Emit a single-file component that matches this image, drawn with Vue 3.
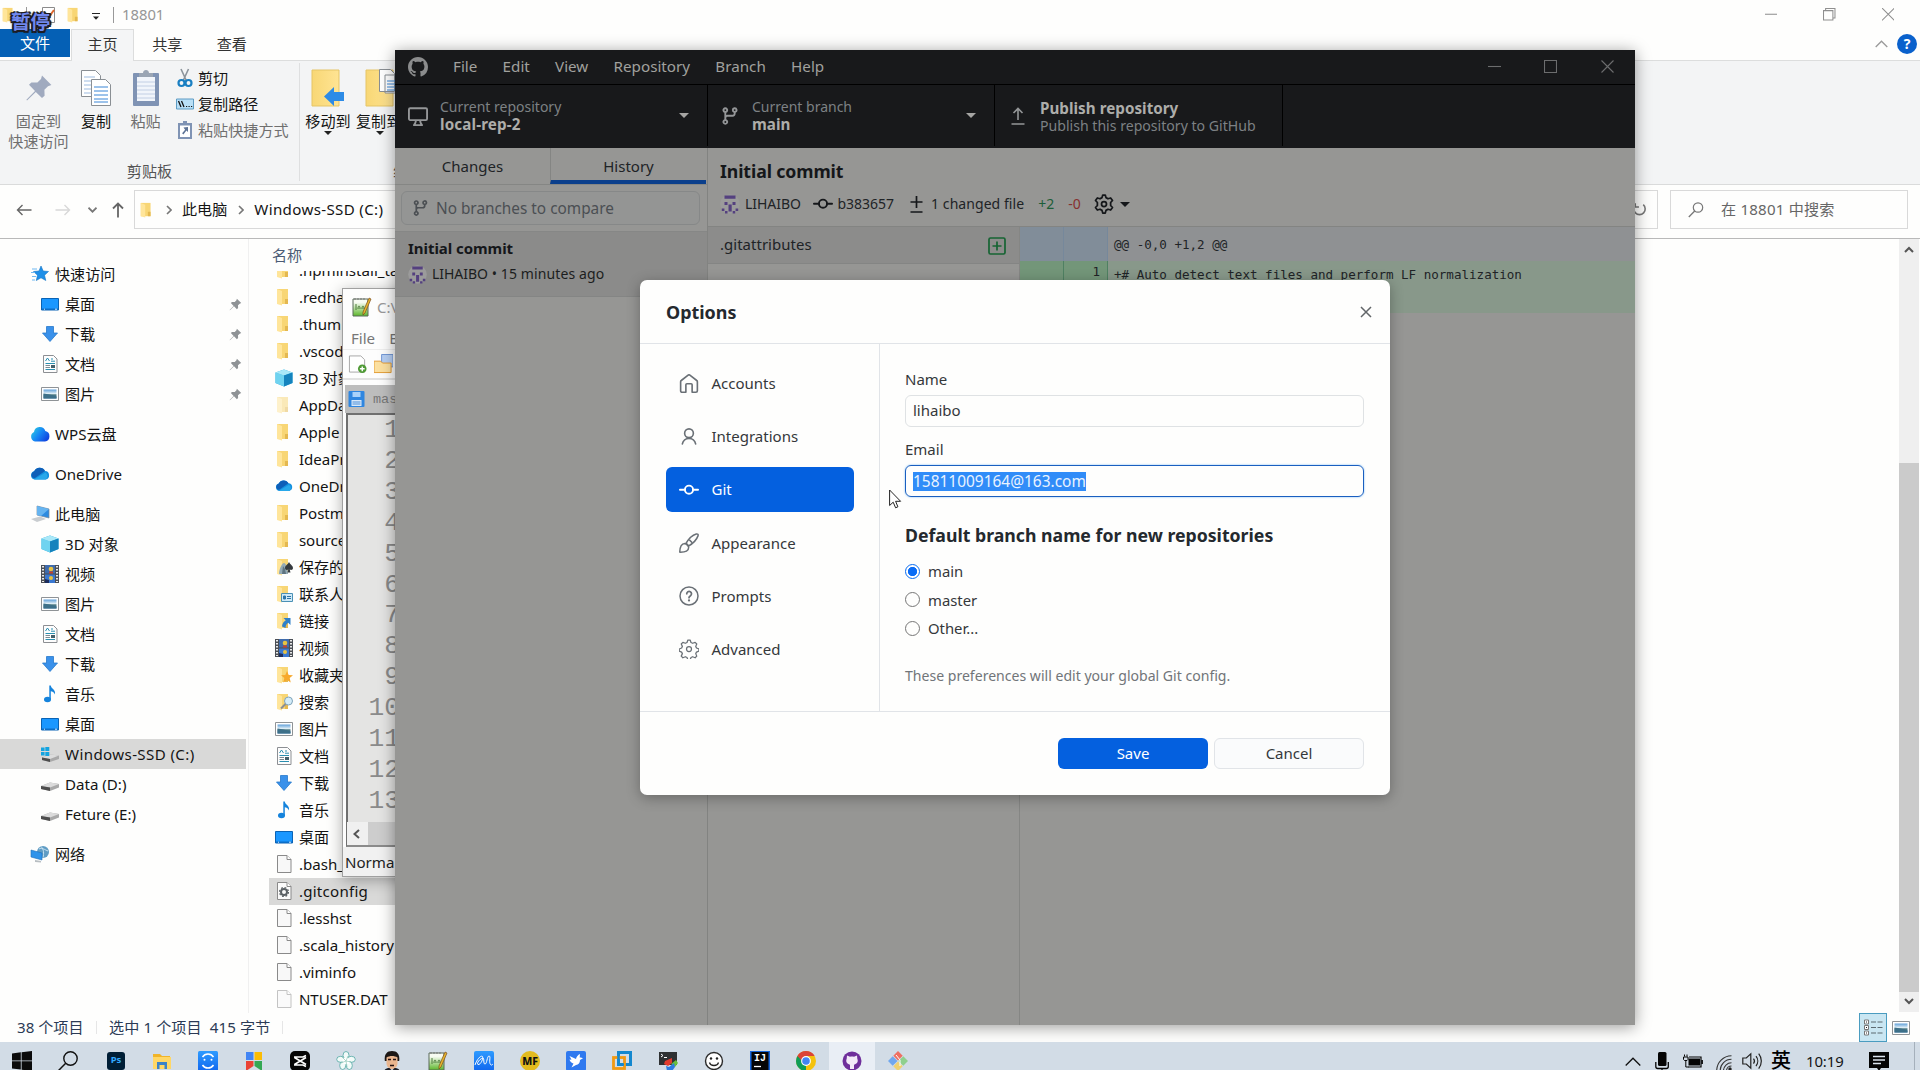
<script setup>
const quick = [
  { icon: 'desktop', label: '桌面' },
  { icon: 'download', label: '下载' },
  { icon: 'doc', label: '文档' },
  { icon: 'picture', label: '图片' },
]
const pc = [
  { icon: 'cube', label: '3D 对象' },
  { icon: 'video', label: '视频' },
  { icon: 'picture', label: '图片' },
  { icon: 'doc', label: '文档' },
  { icon: 'download', label: '下载' },
  { icon: 'music', label: '音乐' },
  { icon: 'desktop', label: '桌面' },
  { icon: 'drivewin', label: 'Windows-SSD (C:)', active: true },
  { icon: 'drive', label: 'Data (D:)' },
  { icon: 'drive', label: 'Feture (E:)' },
]
const files = [
  ['folder', '.npminstall_ta'],
  ['folder', '.redha'],
  ['folder', '.thuml'],
  ['folder', '.vscod'],
  ['cube', '3D 对象'],
  ['folder', 'AppDa', 'faded'],
  ['folder', 'Apple'],
  ['folder', 'IdeaPr'],
  ['onedrive', 'OneDr'],
  ['folder', 'Postm'],
  ['folder', 'source'],
  ['fgame', '保存的'],
  ['fcontact', '联系人'],
  ['flink', '链接'],
  ['video', '视频'],
  ['fstar', '收藏夹'],
  ['fsearch', '搜索'],
  ['picture', '图片'],
  ['doc', '文档'],
  ['download', '下载'],
  ['music', '音乐'],
  ['desktop', '桌面'],
  ['file', '.bash_'],
  ['filegear', '.gitconfig', 'selected'],
  ['file', '.lesshst'],
  ['file', '.scala_history'],
  ['file', '.viminfo'],
  ['file', 'NTUSER.DAT', 'ghost'],
]
const apps = ['ps', 'explorer', 'sync', 'google', 'capcut', 'petal', 'face', 'npp', 'wave', 'mf', 'bird', 'vm', 'xshell', 'smile', 'ij', 'chrome', 'ghd', 'git']
const marks = { ps: 'Ps', mf: 'MF', ij: 'IJ' }
const options = [
  ['home', 'Accounts'],
  ['person', 'Integrations'],
  ['commit', 'Git'],
  ['brush', 'Appearance'],
  ['question', 'Prompts'],
  ['gear', 'Advanced'],
]
const menus = ['File', 'Edit', 'View', 'Repository', 'Branch', 'Help']
</script>

<template>
  <div class="screen">
    <svg class="defs" width="0" height="0">
      <defs>
        <linearGradient id="gFold" x1="0" x2="1"><stop offset="0" stop-color="#f8d775" /><stop offset="1" stop-color="#ffe493" /></linearGradient>
        <linearGradient id="gSky" x1="0" y1="0" x2="0" y2="1"><stop offset="0" stop-color="#5f9fd8" /><stop offset=".45" stop-color="#dfeef6" /><stop offset=".6" stop-color="#4f7a80" /><stop offset="1" stop-color="#3f78a8" /></linearGradient>
        <linearGradient id="gWps" x1="0" x2="1" y2=".6"><stop offset="0" stop-color="#2fd6dc" /><stop offset=".55" stop-color="#1687f5" /><stop offset="1" stop-color="#1148e0" /></linearGradient>
        <linearGradient id="gSync" x1="0" y1="0" x2="0" y2="1"><stop offset="0" stop-color="#2d9bff" /><stop offset="1" stop-color="#1267ee" /></linearGradient>
        <linearGradient id="gNpp" x1="0" y1="0" x2="0" y2="1"><stop offset=".2" stop-color="#f7fbf2" /><stop offset="1" stop-color="#5bb62a" /></linearGradient>
      </defs>
      <symbol id="folder" viewBox="0 0 18 18"><path d="M2 1h11v15H2z" fill="#f8d675" /><path d="M10 11h3v5h-3z" fill="#e4b850" /><path d="M2 1l5 2v14.500L2 16z" fill="#ffe59a" /></symbol>
      <symbol id="desktop" viewBox="0 0 18 18"><path d="M.5 3.500h17v11.500H.5z" fill="#1a97ff" stroke="#0a63b5" /><path d="M1 13.500h16v1.500H1z" fill="#0c6dc7" /><path d="M3 14.200h1M14 14.200h2" stroke="#d5ecff" /></symbol>
      <symbol id="download" viewBox="0 0 18 18"><path d="M5.500 1.500h7V8h4L9 16.500 1.500 8h4z" fill="#3a91ea" stroke="#2678cc" stroke-width=".8" /></symbol>
      <symbol id="doc" viewBox="0 0 18 18"><path d="M2.500.5h10L16 4v13.500H2.500z" fill="#fdfdfd" stroke="#8c8f93" /><path d="M4.500 6l2-3 2 3M10 4h2M10 6.200h4M4.500 8.500H14M4.500 14.500H14" stroke="#2a8fb0" fill="none" /><path d="M4.500 10.500H9M4.500 12.500H9" stroke="#7b8a92" /><path d="M10 10h4v3h-4z" fill="#44606b" /></symbol>
      <symbol id="picture" viewBox="0 0 18 18"><path d="M.5 2.500h17v13H.5z" fill="#fff" stroke="#8f9396" /><path d="M2.500 4.500h13v9h-13z" fill="url(#gSky)" /><path d="M2.500 8.500c4 .5 8 1 13 3v2h-13z" fill="#3d7089" /></symbol>
      <symbol id="cube" viewBox="0 0 18 18"><path d="M9 .5l8.500 3v10.500L9 17.500.5 14V3.500z" fill="#27a9dc" /><path d="M.5 3.500L9 6.500v11L.5 14z" fill="#6fd3f0" /><path d="M9 .5l8.500 3L9 6.500.5 3.500z" fill="#a9e8f8" /><path d="M9 6.500l8.500-3V14L9 17.500z" fill="#1583bd" /></symbol>
      <symbol id="video" viewBox="0 0 18 18"><path d="M0 0h18v18H0z" fill="#4b4f55" /><path d="M2 1v16M16 1v16" stroke="#e9e9e9" stroke-width="2" stroke-dasharray="1.500 1.500" /><path d="M4 0h10v8.500H4z" fill="#3f6bab" /><path d="M4 9.500h10V18H4z" fill="#3a78d0" /><circle cx="10" cy="4" r="2.300" fill="#e8c341" /><path d="M8 6.500l4 0v2H8z" fill="#c6402a" /><circle cx="10" cy="13" r="2" fill="#e8c341" /><path d="M4 14l4 1v3H4z" fill="#1c2d5c" /></symbol>
      <symbol id="music" viewBox="0 0 18 18"><ellipse cx="6.500" cy="14.500" rx="3.500" ry="2.700" fill="#1583dc" /><path d="M8.300 14.500V.5h1.500c.5 3.500 5 3.700 4.200 9-1-2.600-2.700-3-4.200-3.300v8.300z" fill="#1583dc" /></symbol>
      <symbol id="drive" viewBox="0 0 18 18"><path d="M0 11L9 7.500l9 1.500v3.500L9 16l-9-2z" fill="#a9a9a9" /><path d="M0 11l9-3.500L18 9l-9 3.500z" fill="#dcdcdc" /><path d="M0 11l9 1.500V16l-9-2z" fill="#4d4d4d" /></symbol>
      <symbol id="drivewin" viewBox="0 0 18 18"><path d="M1 12.500L9 9.500l9 1v3.500L9 17l-8-2z" fill="#a9a9a9" /><path d="M1 12.500L9 9.500l9 1L9 14z" fill="#dcdcdc" /><path d="M1 12.500L9 14v3l-8-2z" fill="#4d4d4d" /><path d="M0 2.500h3.600v3.600H0zM4.300 2h4v4.100h-4zM0 6.900h3.600v3.600H0zM4.300 6.900h4V11h-4z" fill="#14a4e0" /></symbol>
      <symbol id="wps" viewBox="0 0 20 18"><path d="M5 16.500a5 5 0 01-1-9.400 5.800 5.800 0 0111.300-1A5.300 5.300 0 0115 16.500z" fill="url(#gWps)" /></symbol>
      <symbol id="onedrive" viewBox="0 0 20 18"><path d="M4.500 14.500a4.200 4.200 0 01-.3-8.200A6 6 0 0115 6a4.300 4.300 0 01.7 8.500z" fill="#1490df" /><path d="M4.200 6.300A6 6 0 0115 6L5 13c-4 1-5-5-.8-6.700z" fill="#0f5fb8" /><path d="M4 14.500L15.500 7.500a4.200 4.200 0 01.2 7z" fill="#28a8ea" /></symbol>
      <symbol id="star" viewBox="0 0 18 18"><path d="M10 1l2.200 5 5.300.5-4 3.700 1.300 5.300L10 12.800 5.300 15.500l1.200-5.300-4-3.700L8 6z" fill="#1e8fe8" stroke="#1273c4" stroke-width=".6" /><path d="M1 4h5M0 7.500h4M1 11.500h4M1 15h3" stroke="#6fb8f2" /></symbol>
      <symbol id="thispc" viewBox="0 0 20 18"><path d="M7 1l12 3v9L7 10z" fill="#2d8be0" stroke="#7a8a99" stroke-width=".7" /><path d="M7 1l12 3-8 7-4-1z" fill="#66b4f0" /><path d="M1 14l9-2.500 6 2.500-9 3z" fill="#c9cdd0" /></symbol>
      <symbol id="network" viewBox="0 0 18 18"><circle cx="12" cy="7" r="6" fill="#5f9cc4" /><path d="M8 4c3-2 6 1 9 2M10 1.500c3 3 3 7 2 11" stroke="#c7e2f2" fill="none" /><path d="M0 5l11 3v7L0 12z" fill="#2f93ea" stroke="#1e6fb8" stroke-width=".6" /><path d="M4 15l6 1v1.500l-6-.5z" fill="#b8bec2" /></symbol>
      <symbol id="file" viewBox="0 0 18 18"><path d="M2.500.5h9.500L16 4.500v13H2.500z" fill="#f8f8f8" stroke="#8a8a8a" /><path d="M12 .5v4h4" fill="#fff" stroke="#8a8a8a" /></symbol>
      <symbol id="filegear" viewBox="0 0 18 18"><path d="M2.500.5h9.500L16 4.500v13H2.500z" fill="#fbfbfb" stroke="#8a8a8a" /><path d="M12 .5v4h4" fill="#fff" stroke="#8a8a8a" /><circle cx="9" cy="10" r="3" fill="none" stroke="#5c6266" stroke-width="2" /><circle cx="9" cy="10" r="4.500" fill="none" stroke="#5c6266" stroke-width="1.200" stroke-dasharray="1.800 1.730" /></symbol>
      <symbol id="fgame" viewBox="0 0 18 18"><use href="#folder" /><path d="M4 16c0-5 3-11 5-11s4 6 4 11z" fill="#93aab6" /><path d="M7 16l1-8 2 3 1 5z" fill="#5f7480" /><path d="M14 4c1 2.500 4 3.500 4 6 0 2-2 2.500-3.300 1.500l.8 3h-3l.8-3C12 12.500 10 12 10 10c0-2.500 3-3.500 4-6z" fill="#353a3e" /></symbol>
      <symbol id="fcontact" viewBox="0 0 18 18"><use href="#folder" /><path d="M6.500 8.500h11v8h-11z" fill="#cfe9f7" stroke="#4a90b5" /><path d="M8.500 11h2v3h-2zM12 11.500h4M12 13.500h4" stroke="#2f76a6" fill="#2f76a6" /></symbol>
      <symbol id="flink" viewBox="0 0 18 18"><use href="#folder" /><path d="M15.500 6v7l-2.300-2.300c-2 1-2.700 3-2.700 5.300L7 14.500c.3-3 1.500-4.700 3.800-6.200L8.500 6z" fill="#2f80c9" /></symbol>
      <symbol id="fstar" viewBox="0 0 18 18"><use href="#folder" /><path d="M12 5l1.700 4 4.300.3-3.300 2.800 1 4.400-3.700-2.400-3.700 2.400 1-4.400L6 9.300l4.300-.3z" fill="#f7a92c" /></symbol>
      <symbol id="fsearch" viewBox="0 0 18 18"><use href="#folder" /><circle cx="13.500" cy="8" r="4" fill="#d4ecf8" stroke="#7fa3ba" /><path d="M10.500 11L6 15.500" stroke="#8a8f95" stroke-width="2" /></symbol>
      <symbol id="pin" viewBox="0 0 14 14"><path d="M8.500.8l4.700 4.700-1.700.6-1.800 1.800.1 3L8.500 12 5.400 9 1 13.300l-.3-.4L5 8.500 2 5.400l1.200-1.200 3 .1L8 2.500z" fill="currentColor" /></symbol>
      <symbol id="npp" viewBox="0 0 20 20"><path d="M1 2h15v17H1z" fill="url(#gNpp)" stroke="#5a6a5a" /><path d="M3 1v2M6 1v2M9 1v2M12 1v2" stroke="#777" /><path d="M4 7v6M6 12c0-4 2-4 2 0M10 12c0-4 2-4 2 0" stroke="#4c7a3a" fill="none" /><path d="M17 1l2 1-6 14-2 2v-3z" fill="#e6b52a" stroke="#7a4a20" stroke-width=".7" /></symbol>

      <symbol id="github" viewBox="0 0 16 16"><path fill="currentColor" d="M8 0C3.580 0 0 3.580 0 8c0 3.540 2.290 6.530 5.470 7.590.4.070.55-.17.55-.38 0-.19-.01-.82-.01-1.490-2.010.37-2.530-.49-2.690-.94-.09-.23-.48-.94-.82-1.130-.28-.15-.68-.52-.01-.53.63-.01 1.080.58 1.230.82.72 1.210 1.870.87 2.330.66.070-.52.28-.87.51-1.070-1.780-.2-3.640-.89-3.640-3.950 0-.87.31-1.590.82-2.150-.08-.2-.36-1.020.08-2.120 0 0 .67-.21 2.200.82.64-.18 1.320-.27 2-.27.68 0 1.360.09 2 .27 1.530-1.040 2.200-.82 2.200-.82.44 1.100.16 1.920.08 2.120.51.56.82 1.270.82 2.150 0 3.070-1.870 3.750-3.650 3.950.29.25.54.73.54 1.480 0 1.070-.01 1.930-.01 2.200 0 .21.15.46.55.38A8.013 8.013 0 0016 8c0-4.420-3.580-8-8-8z" /></symbol>
      <symbol id="branch" viewBox="0 0 16 16"><path fill="currentColor" d="M11.750 2.500a.75.75 0 100 1.500.75.75 0 000-1.500zm-2.250.75a2.250 2.250 0 113 2.122V6A2.500 2.500 0 0110 8.500H6a1 1 0 00-1 1v1.128a2.251 2.251 0 11-1.500 0V5.372a2.250 2.250 0 111.500 0v1.836A2.492 2.492 0 016 7h4a1 1 0 001-1v-.628A2.250 2.250 0 019.500 3.250zM4.250 12a.75.75 0 100 1.500.75.75 0 000-1.500zM3.500 3.250a.75.75 0 111.500 0 .75.75 0 01-1.500 0z" fill-rule="evenodd" /></symbol>
      <symbol id="commit" viewBox="0 0 16 16"><g fill="none" stroke="currentColor" stroke-width="1.500" stroke-linecap="round"><circle cx="8" cy="7.750" r="3.250" /><path d="M.75 7.750h4M11.250 7.750h4" /></g></symbol>
      <symbol id="monitor" viewBox="0 0 16 16"><path fill="currentColor" d="M1.750 2.500h12.500a.25.25 0 01.25.25v7.500a.25.25 0 01-.25.25H1.750a.25.25 0 01-.25-.25v-7.500a.25.25 0 01.25-.25zM14.250 1H1.750A1.750 1.750 0 000 2.750v7.500C0 11.216.784 12 1.750 12h3.727c-.1 1.041-.52 1.872-1.292 2.757A.75.75 0 004.750 16h6.500a.75.75 0 00.565-1.243c-.772-.885-1.193-1.716-1.292-2.757h3.727A1.750 1.750 0 0016 10.250v-7.500A1.750 1.750 0 0014.250 1zM9.018 12H6.982a5.720 5.720 0 01-.765 2.500h3.566a5.720 5.720 0 01-.765-2.500z" fill-rule="evenodd" /></symbol>
      <symbol id="gear" viewBox="0 0 16 16"><g fill="none" stroke="currentColor"><circle cx="8" cy="8" r="2" /><path d="M7.100.8h1.800l.7 2 1.300.6 2-.7 1.300 1.300-.8 1.900.6 1.300 1.900.8v1.700l-1.900.8-.6 1.200.8 2-1.300 1.300-2-.8-1.300.6-.7 1.900H7.100l-.7-1.900-1.300-.6-2 .8-1.300-1.300.9-2-.6-1.200-1.900-.8V8l1.900-.8.6-1.300L1.800 4l1.300-1.300 2 .7 1.300-.6z" stroke-linejoin="round" /></g></symbol>
      <symbol id="gearhex" viewBox="0 0 16 16"><g fill="none" stroke="currentColor" stroke-width="1.400" stroke-linejoin="round"><circle cx="8" cy="8" r="2" /><path d="M7 .8h2l.6 2.100 1.600.9 2.100-.6 1.500 2-1.500 1.600v2.400l1.500 1.600-1.500 2-2.100-.6-1.600.9L9 15.200H7l-.6-2.100-1.600-.9-2.100.6-1.500-2 1.500-1.600V6.800L1.200 5.200l1.500-2 2.100.6 1.600-.9z" /></g></symbol>
      <symbol id="home" viewBox="0 0 16 16"><path d="M1.300 6.200c0-.5.2-.8.5-1L7.300.9c.4-.3 1-.3 1.400 0l5.500 4.300c.3.200.5.500.5 1v7.200c0 .7-.5 1.200-1.200 1.200h-3V8.600c0-.5-.3-.8-.8-.8H6.300c-.5 0-.8.3-.8.8v6H2.500c-.7 0-1.200-.5-1.200-1.200z" fill="none" stroke="currentColor" stroke-width="1.300" stroke-linejoin="round" /></symbol>
      <symbol id="person" viewBox="0 0 16 16"><g fill="none" stroke="currentColor" stroke-width="1.300" stroke-linecap="round"><circle cx="8" cy="5" r="3.500" /><path d="M2.700 13.500a5.400 5.400 0 0110.600 0" /></g></symbol>
      <symbol id="brush" viewBox="0 0 16 16"><g fill="none" stroke="currentColor" stroke-width="1.200" stroke-linejoin="round"><path d="M5.500 8.500C7.500 5 11 1.600 13.800.8c1.200-.3 1.800.4 1.400 1.500-1 2.800-4.200 6.200-7.700 8.200z" /><path d="M4.700 8.400a3 3 0 013 3.100c0 2.700-2.200 3.900-7.100 3.800.1-4.200 1-6.800 4.100-6.900zM8.300 5.500l2.300 2.300" /></g></symbol>
      <symbol id="question" viewBox="0 0 16 16"><g fill="none" stroke="currentColor" stroke-width="1.200" stroke-linecap="round"><circle cx="8" cy="8" r="7.200" /><path d="M6.200 6.200a1.900 1.900 0 113 1.600c-.8.5-1.200.8-1.200 1.500" stroke-width="1.400" /></g><circle cx="8" cy="11.500" r=".9" fill="currentColor" /></symbol>
      <symbol id="avatar" viewBox="0 0 20 20"><circle cx="10" cy="10" r="9.800" fill="#9b9b9b" /><path d="M4.500 1.500h11v3.300h-11zM4.500 8h3v3h-3zM12.500 8h3v3h-3zM8.500 10.500h3.200v7H8.500zM1.800 14.500h2.600v2.600H1.800zM15.600 14.500h2.600v2.600h-2.600zM5 17h2.500v2.500H5zM12.700 17h2.500v2.500h-2.500z" fill="#54407f" /></symbol>

      <symbol id="ps" viewBox="0 0 20 20"><rect x="1" y="1" width="18" height="18" rx="3" fill="#001e36" /></symbol>
      <symbol id="explorer" viewBox="0 0 20 20"><path d="M1 3h7l2 2h8v12H1z" fill="#f0b429" /><path d="M1 6h18v12H1z" fill="#ffd766" /><path d="M5 18v-7h10v7h-2.500v-4h-5v4z" fill="#3b83c9" /></symbol>
      <symbol id="sync" viewBox="0 0 20 20"><rect width="20" height="20" rx="1.500" fill="url(#gSync)" /><path d="M4.500 6c2.500-4 8.500-4 11 0M15.500 14c-2.500 4-8.500 4-11 0" stroke="#fff" stroke-width="1.500" fill="none" /><circle cx="6.500" cy="8.700" r="1" fill="#fff" /><circle cx="13.500" cy="8.700" r="1" fill="#fff" /></symbol>
      <symbol id="google" viewBox="0 0 20 20"><path d="M2 1h7.500v8H2z" fill="#4285f4" /><path d="M10.500 1H18v8h-7.500z" fill="#fbbc05" /><path d="M2 10h7.500v5L2 20z" fill="#ea4335" /><path d="M10.500 10H18v10l-7.500-5z" fill="#34a853" /></symbol>
      <symbol id="capcut" viewBox="0 0 20 20"><rect width="20" height="20" rx="5" fill="#060606" /><path d="M4 6h9l3-1.500M4 14h9l3 1.500M4.500 6.500L16 13.500M4.500 13.500L16 6.500" stroke="#fff" stroke-width="1.700" fill="none" /></symbol>
      <symbol id="petal" viewBox="0 0 20 20"><g fill="#f3fbf9" stroke="#3d9d9a" stroke-width=".7"><ellipse cx="10" cy="4.500" rx="3" ry="4" /><ellipse cx="15.300" cy="8.300" rx="4" ry="3" /><ellipse cx="13.300" cy="14.500" rx="3" ry="4" /><ellipse cx="6.700" cy="14.500" rx="3" ry="4" /><ellipse cx="4.700" cy="8.300" rx="4" ry="3" /></g><circle cx="10" cy="10" r="3.500" fill="#fff" /><path d="M10 10l2-5M10 10l5 1M10 10l1 6M10 10l-5 2M10 10L6 6" stroke="#8fc7b8" stroke-width=".7" /></symbol>
      <symbol id="face" viewBox="0 0 20 20"><path d="M2.800 10C2 3 5 0 10 0s8 3 7.200 10z" fill="#1c1715" /><path d="M4.500 6.500c3-2 8-2 11 0v5.500c0 4-3 6-5.500 6s-5.500-2-5.500-6z" fill="#e9b58e" /><path d="M6 8.500h3M11 8.500h3M8 14.500h4" stroke="#221111" stroke-width="1.300" /><path d="M2 20c1-2 3-3 5.500-3l2.500 2.500 2.500-2.500c2.500 0 4.500 1 5.500 3z" fill="#1d1f27" /></symbol>
      <symbol id="wave" viewBox="0 0 20 20"><rect width="20" height="20" rx="2" fill="url(#gSync)" /><path d="M1 14C3 8 7 4 8.500 5.500 9.500 7 7 14 4 13.500c-2-1 2-6 5-6.500 1.500 0 0 6 2 6s2-8 4-8 0 5 1 7.500 1.800 1.500 3 .5" stroke="#fff" stroke-width="1" fill="none" /></symbol>
      <symbol id="mf" viewBox="0 0 20 20"><circle cx="10" cy="10" r="10" fill="#e3bb1e" /></symbol>
      <symbol id="bird" viewBox="0 0 20 20"><rect width="20" height="20" rx="2" fill="#2f79ef" /><path d="M3.500 5l6.500 3c.5-2.500 2-4 4-5l-.3 3.500c1.500 0 2.500.3 3.300.8L14 9c0 3-1.500 4.500-4 5l-4.500 2.500 2-4C5.500 12 4 10.500 3.500 8.500l2 .3z" fill="#fff" /></symbol>
      <symbol id="vm" viewBox="0 0 20 20"><rect x="6.500" y="1.500" width="12" height="12" fill="none" stroke="#1488cf" stroke-width="3" /><rect x="1.500" y="6.500" width="11" height="11" fill="none" stroke="#f29a12" stroke-width="2.800" /><path d="M6.500 5v8.500H12" fill="none" stroke="#1488cf" stroke-width="2.500" /></symbol>
      <symbol id="xshell" viewBox="0 0 20 20"><path d="M1 1h18v13H1z" fill="#2f3133" /><path d="M3 3l2 1.500L3 6M6 6.500h3" stroke="#fff" fill="none" /><path d="M7 10l7-3v5l-4 3-4-2z" fill="#e33b2e" /><path d="M13 13l5-4 2 3-3 4z" fill="#6bbf3a" /><path d="M8 15l3 1 5-4 1 4-3 4H9z" fill="#2f7be0" /></symbol>
      <symbol id="smile" viewBox="0 0 20 20"><circle cx="10" cy="10" r="8.500" fill="#fff" stroke="#2b2b2b" stroke-width="1.400" /><path d="M5.500 11.500c1 4 8 4 9 0" fill="none" stroke="#222" stroke-width="1.300" /><circle cx="7" cy="7.500" r="1.200" fill="#222" /><circle cx="13" cy="7.500" r="1.200" fill="#222" /></symbol>
      <symbol id="ij" viewBox="0 0 20 20"><rect width="20" height="20" fill="#1765d8" /><rect x="1.500" y="1" width="17" height="18" fill="#050505" /><path d="M4 15.500h7" stroke="#fff" stroke-width="1.300" /></symbol>
      <symbol id="chrome" viewBox="0 0 20 20"><circle cx="10" cy="10" r="10" fill="#f4c20d" /><path d="M10 10v10A10 10 0 011.340 5z" fill="#0f9d58" /><path d="M1.340 5a10 10 0 0117.320 0H10L7 11z" fill="#db4437" /><circle cx="10" cy="10" r="4.900" fill="#fff" /><circle cx="10" cy="10" r="3.800" fill="#4285f4" /></symbol>
      <symbol id="ghd" viewBox="0 0 20 20"><circle cx="10" cy="10" r="9.500" fill="#6f2f9b" /><path d="M5 4.500l3 1.200c1.300-.3 2.700-.3 4 0l3-1.200.3 3.200c1.300 3-.3 5.300-3.300 5.800v4.500H8v-4.500c-3-.5-4.600-2.800-3.300-5.800z" fill="#f3eaf8" /><path d="M7.500 11.500h5v2h-5z" fill="#f3eaf8" /></symbol>
      <symbol id="git" viewBox="0 0 20 20"><path d="M10 0l4.700 4.700L10 9.500 5.300 4.700z" fill="#ee6f62" /><path d="M4.700 5.300L9.500 10l-4.800 4.700L0 10z" fill="#71a7ee" /><path d="M15.300 5.300L20 10l-4.700 4.700L10.500 10z" fill="#8fd08d" /><path d="M10 10.500l4.700 4.800L10 20l-4.700-4.700z" fill="#f0d170" /><path d="M8 4l4 5v6" stroke="#fff" fill="none" /></symbol>
    </svg>

    <!-- File Explorer -->
    <section class="explorer">
      <header class="ex-title">
        <svg class="qi f1"><use href="#folder" /></svg>
        <i class="vs v1"></i>
        <svg class="qi f2" viewBox="0 0 16 18"><path d="M1.500 1.500h12v15h-12z" fill="#fff" stroke="#8b8b8b" /><path d="M4 8l3 4 6-8" fill="none" stroke="#e0662a" stroke-width="2" /></svg>
        <svg class="qi f3"><use href="#folder" /></svg>
        <svg class="drop" viewBox="0 0 8 8"><path d="M0 .5h8" stroke="#222" /><path d="M1 3.500h6L4 6.800z" fill="#222" /></svg>
        <i class="vs v2"></i>
        <span class="ex-name">18801</span>
        <div class="wctl">
          <svg viewBox="0 0 12 12"><path d="M0 6h12" /></svg>
          <svg viewBox="0 0 12 12"><path d="M.5 2.500h9v9h-9zM2.500 2.500v-2h9v9h-2" /></svg>
          <svg viewBox="0 0 12 12"><path d="M0 0l12 12M12 0L0 12" /></svg>
        </div>
      </header>
      <nav class="ex-tabs">
        <span class="tab file">文件</span><span class="tab on">主页</span><span class="tab">共享</span><span class="tab">查看</span>
        <div class="ex-help">
          <svg width="13" height="8" viewBox="0 0 13 8"><path d="M.7 7l5.800-5.800L12.300 7" fill="none" stroke="#9a9a9a" stroke-width="1.300" /></svg>
          <b>?</b>
        </div>
      </nav>
      <div class="ribbon">
        <div class="grp">
          <div class="tools">
            <div class="big dim w1">
              <svg width="28" height="28" viewBox="0 0 14 14"><use href="#pin" /></svg>
              <span>固定到<br />快速访问</span>
            </div>
            <div class="big w2">
              <svg width="32" height="38" viewBox="0 0 32 38"><g fill="#fff" stroke="#8a8f94"><path d="M1.500 1.500h14l5 5v21h-19z" /><path d="M11.500 10.500h14l5 5v21h-19z" /></g><path d="M4 8h11M4 12h7M4 16h7M4 20h7M4 24h7" stroke="#9dbbe0" /><path d="M14 18h14M14 22h14M14 26h14M14 30h14M14 33h14" stroke="#3b86d6" /></svg>
              <span>复制</span>
            </div>
            <div class="big dim w3">
              <svg width="28" height="38" viewBox="0 0 28 38"><rect x="1" y="4" width="26" height="33" rx="1" fill="#7f93b4" /><path d="M5 8h18v24H5z" fill="#f1f5fb" /><path d="M5 13h18M5 17h18M5 21h18M5 25h18M5 29h18" stroke="#c2cfe4" /><path d="M7 4h4c0-4 6-4 6 0h4v4H7z" fill="#9aa5b4" /></svg>
              <span>粘贴</span>
            </div>
            <div class="smalls">
              <div><svg viewBox="0 0 18 20"><path d="M5 1l5.500 12M12.500 1L7 13" stroke="#8c949b" stroke-width="1.600" fill="none" /><circle cx="5.500" cy="15" r="3" fill="none" stroke="#1a7fc2" stroke-width="2.200" /><circle cx="12.500" cy="15" r="3" fill="none" stroke="#1a7fc2" stroke-width="2.200" /></svg>剪切</div>
              <div><svg viewBox="0 0 18 20"><path d="M.5 5h17v10H.5z" fill="#b9dff6" stroke="#5e9cc4" /><path d="M2.500 7l2.500 6M5.500 7L8 13" stroke="#111" stroke-width="1.300" /><path d="M10 12.500h1.200M12.500 12.500h1.200M15 12.500h1.200" stroke="#111" /></svg>复制路径</div>
              <div class="dim"><svg viewBox="0 0 18 20"><rect x="2" y="3" width="14" height="16" fill="#7f93b4" /><path d="M4 5.500h10v11.500H4z" fill="#fff" /><path d="M7 1h4v3H7z" fill="#7f93b4" /><path d="M12 7v5l-1.600-1.500-3 4-1.300-1.200 3-3.500L7.500 7.500z" fill="#5d7396" /></svg>粘贴快捷方式</div>
            </div>
          </div>
          <p>剪贴板</p>
        </div>
        <div class="grp g2">
          <div class="tools">
            <div class="big w4">
              <svg width="34" height="38" viewBox="0 0 34 38"><path d="M1 1h27v36H1z" fill="url(#gFold)" stroke="#e5c566" /><path d="M33 23v9H23v5l-10-9.500L23 18v5z" fill="#2d8be6" /></svg>
              <span>移动到</span><em></em>
            </div>
            <div class="big w5">
              <svg width="34" height="38" viewBox="0 0 34 38"><path d="M1 1h27v36H1z" fill="url(#gFold)" stroke="#e5c566" /><path d="M14.500.5h11l4 4v18h-15zM20 6h12v18H20z" fill="#fff" stroke="#8a8f94" /><path d="M22 12h9M22 15h9M22 18h9M22 21h9" stroke="#3b86d6" /></svg>
              <span>复制到</span><em></em>
            </div>
          </div>
          <p class="p2">组</p>
        </div>
      </div>
      <div class="addr">
        <div class="arrows">
          <svg width="16" height="12" viewBox="0 0 16 12"><path d="M15.500 6H1.500M6.500 1L1.500 6l5 5" stroke="#666" stroke-width="1.400" fill="none" /></svg>
          <svg width="16" height="12" viewBox="0 0 16 12"><path d="M.5 6h14M9.500 1l5 5-5 5" stroke="#d8d8d8" stroke-width="1.400" fill="none" /></svg>
          <svg width="9" height="6" viewBox="0 0 9 6"><path d="M.5.7l4 4 4-4" stroke="#777" stroke-width="1.700" fill="none" /></svg>
          <svg width="12" height="16" viewBox="0 0 12 16"><path d="M6 15.500V1.500M1 6.500l5-5 5 5" stroke="#666" stroke-width="1.800" fill="none" /></svg>
        </div>
        <div class="path">
          <svg class="pf"><use href="#folder" /></svg>
          <svg class="ch" viewBox="0 0 6 10"><path d="M1 1l4 4-4 4" /></svg>
          <span>此电脑</span>
          <svg class="ch" viewBox="0 0 6 10"><path d="M1 1l4 4-4 4" /></svg>
          <span class="ssd">Windows-SSD (C:)</span>
          <svg class="re" viewBox="0 0 14 14"><path d="M10.500 2.500a5.300 5.300 0 11-7 0M3 1.200v3.500h3.500" fill="none" stroke="#777" stroke-width="1.500" /></svg>
        </div>
        <div class="find">
          <svg width="16" height="16" viewBox="0 0 16 16"><circle cx="10" cy="5.500" r="4.700" fill="none" stroke="#777" stroke-width="1.200" /><path d="M6.700 9L.8 15" stroke="#777" stroke-width="1.300" /></svg>
          <span>在 18801 中搜索</span>
        </div>
      </div>
      <div class="ex-body">
        <aside class="tree">
          <div class="row top"><svg><use href="#star" /></svg><span>快速访问</span></div>
          <div v-for="q in quick" :key="q.label" class="row"><svg><use :href="'#' + q.icon" /></svg><span>{{ q.label }}</span><svg class="pin"><use href="#pin" /></svg></div>
          <div class="row top gap"><svg><use href="#wps" /></svg><span>WPS云盘</span></div>
          <div class="row top gap"><svg><use href="#onedrive" /></svg><span>OneDrive</span></div>
          <div class="row top gap"><svg><use href="#thispc" /></svg><span>此电脑</span></div>
          <div v-for="q in pc" :key="q.label" class="row" :class="{ active: q.active }"><svg><use :href="'#' + q.icon" /></svg><span>{{ q.label }}</span></div>
          <div class="row top gap"><svg><use href="#network" /></svg><span>网络</span></div>
        </aside>
        <main class="list">
          <div class="colh">名称</div>
          <div class="rows">
            <div class="shift">
              <div v-for="f in files" :key="f[1]" class="frow" :class="f[2]"><svg><use :href="'#' + f[0]" /></svg><span>{{ f[1] }}</span></div>
            </div>
          </div>
        </main>
        <div class="sbar">
          <svg viewBox="0 0 10 7"><path d="M1 6l4-4 4 4" /></svg>
          <div class="thumb"></div>
          <svg viewBox="0 0 10 7"><path d="M1 1l4 4 4-4" /></svg>
        </div>
      </div>
      <footer class="status">
        <span class="s1">38 个项目</span><i></i><span class="s2">选中 1 个项目&nbsp; 415 字节</span><i></i>
        <div class="views">
          <span class="v on"><svg width="20" height="17" viewBox="0 0 20 17"><path d="M1.500 1h4v4h-4zM1.500 6.500h4v4h-4zM1.500 12h4v4h-4z" fill="#fff" stroke="#777" /><path d="M3 3h1M3 8.500h1M3 14h1" stroke="#222" /><path d="M8 3h5M14.500 3h5M8 8.500h5M14.500 8.500h5M8 14h5M14.500 14h5" stroke="#5d6a70" /></svg></span>
          <svg class="v2i"><use href="#picture" /></svg>
        </div>
      </footer>
    </section>

    <!-- Text editor behind the client window -->
    <section class="npp">
      <div class="np-title"><svg><use href="#npp" /></svg><span>C:\</span></div>
      <div class="np-menu"><span>File</span><span>E</span></div>
      <div class="np-tools">
        <svg viewBox="0 0 20 20"><path d="M1.500 1.500h12l4 4v13h-16z" fill="#fff" stroke="#a5a5a5" /><circle cx="15" cy="15" r="4.500" fill="#4f9a35" /><path d="M15 12.500v5M12.500 15h5" stroke="#fff" stroke-width="1.500" /></svg>
        <svg viewBox="0 0 20 20"><path d="M8 0h12v13H8z" fill="#b6cff4" stroke="#6f95d4" /><path d="M0 7h7l2 2h9v10H0z" fill="#fce0a0" stroke="#e39a33" /></svg>
      </div>
      <div class="np-tab"><svg viewBox="0 0 16 16"><rect width="16" height="16" rx="1" fill="#2f86e0" /><path d="M4 1h8v5H4z" fill="#a9d2fb" /><path d="M3 9h10v6H3z" fill="#d9e9fa" /><path d="M4 11h8M4 13h8" stroke="#4d8fd8" /></svg><span>mas</span></div>
      <div class="np-edit"><div v-for="n in 13" :key="n">{{ n }}</div></div>
      <div class="np-scroll"><svg viewBox="0 0 7 10"><path d="M6 1L1.500 5 6 9" fill="none" stroke="#555" stroke-width="2" /></svg><i></i></div>
      <div class="np-status">Norma</div>
    </section>

    <!-- GitHub Desktop -->
    <section class="gh">
      <header class="gh-menu">
        <svg class="logo"><use href="#github" /></svg>
        <span v-for="m in menus" :key="m">{{ m }}</span>
        <div class="gctl">
          <svg viewBox="0 0 13 13"><path d="M0 6.500h13" /></svg>
          <svg viewBox="0 0 13 13"><path d="M.5.5h12v12H.5z" /></svg>
          <svg viewBox="0 0 13 13"><path d="M.5.5l12 12M12.500.5l-12 12" /></svg>
        </div>
      </header>
      <div class="gh-bar">
        <div class="seg a"><svg class="m"><use href="#monitor" /></svg><div><p>Current repository</p><b class="k1">local-rep-2</b></div><em></em></div>
        <div class="seg b"><svg class="br"><use href="#branch" /></svg><div><p>Current branch</p><b class="k2">main</b></div><em></em></div>
        <div class="seg c"><svg class="up" viewBox="0 0 14 18"><path d="M7 13V2M2.500 6L7 1.500 11.500 6M.5 17h13" fill="none" stroke="currentColor" stroke-width="1.600" /></svg><div><b class="k3">Publish repository</b><p>Publish this repository to GitHub</p></div></div>
      </div>
      <div class="gh-main">
        <aside class="hist">
          <div class="gt"><span>Changes</span><span class="on">History</span></div>
          <div class="fbox"><div><svg><use href="#branch" /></svg>No branches to compare</div></div>
          <div class="ci"><b>Initial commit</b><p><svg><use href="#avatar" /></svg><span class="li">LIHAIBO</span><span>&nbsp;• 15 minutes ago</span></p></div>
        </aside>
        <div class="detail">
          <div class="dh">
            <h2>Initial commit</h2>
            <div class="meta">
              <svg class="av"><use href="#avatar" /></svg><span class="li">LIHAIBO</span>
              <svg class="cm"><use href="#commit" /></svg><span class="sha">b383657</span>
              <svg class="pm" viewBox="0 0 13 17"><path d="M6.500 0v12M.5 6h12M.5 16h12" stroke="currentColor" stroke-width="1.700" /></svg><span class="cf">1 changed file</span>
              <span class="add">+2</span><span class="del">-0</span>
              <svg class="gr"><use href="#gearhex" /></svg><em></em>
            </div>
          </div>
          <div class="dd">
            <div class="fl"><div><span>.gitattributes</span><svg viewBox="0 0 18 18"><rect x="1" y="1" width="16" height="16" rx="1.500" fill="none" stroke="currentColor" stroke-width="1.700" /><path d="M9 4.500v9M4.500 9h9" stroke="currentColor" stroke-width="1.700" /></svg></div></div>
            <div class="diff">
              <div class="hunk"><i></i><i></i><code>@@ -0,0 +1,2 @@</code></div>
              <div class="plus"><i></i><i>1</i><code>+# Auto detect text files and perform LF normalization</code></div>
            </div>
          </div>
        </div>
      </div>
    </section>

    <!-- Options dialog -->
    <section class="dlg">
      <header><h1>Options</h1><svg viewBox="0 0 12 12"><path d="M1 1l10 10M11 1L1 11" /></svg></header>
      <div class="db">
        <nav><div v-for="o in options" :key="o[1]" :class="{ on: o[1] === 'Git' }"><svg><use :href="'#' + o[0]" /></svg><span>{{ o[1] }}</span></div></nav>
        <form>
          <label class="l1">Name</label><div class="inp">lihaibo</div>
          <label class="l2">Email</label><div class="inp focus"><mark>15811009164@163.com</mark></div>
          <h3>Default branch name for new repositories</h3>
          <div class="rd on"><i></i>main</div>
          <div class="rd"><i></i>master</div>
          <div class="rd"><i></i>Other...</div>
          <p>These preferences will edit your global Git config.</p>
        </form>
      </div>
      <footer><span class="save">Save</span><span class="cancel">Cancel</span></footer>
    </section>

    <svg class="cursor" width="13" height="20" viewBox="0 0 13 20"><path d="M.6 1v15.500l3.600-3.300 2.400 5.600 2.300-1-2.300-5.500h5z" fill="#fff" stroke="#222" /></svg>
    <div class="pause">暂停</div>

    <!-- Taskbar -->
    <footer class="task">
      <div class="ti st"><svg viewBox="0 0 20 20"><path d="M0 2.500l8.800-1.200v8.200H0zM9.600 1.200L20 0v9.500H9.600zM0 10.300h8.800v8.300L0 17.400zM9.600 10.300H20V20L9.600 18.700z" fill="#0b0b0b" /></svg></div>
      <div class="ti se"><svg viewBox="0 0 20 20"><circle cx="12.500" cy="7.500" r="6.700" fill="none" stroke="#111" stroke-width="1.400" /><path d="M7.700 12.300L.5 19.500" stroke="#111" stroke-width="1.500" /></svg></div>
      <div v-for="a in apps" :key="a" class="ti" :class="{ cur: a === 'ghd' }"><svg><use :href="'#' + a" /></svg><b v-if="marks[a]" :class="'mk-' + a">{{ marks[a] }}</b></div>
      <div class="tray">
        <svg class="t1" viewBox="0 0 16 9"><path d="M.7 8.500L8 1.200l7.300 7.300" fill="none" stroke="#111" stroke-width="1.300" /></svg>
        <svg class="t2" viewBox="0 0 14 20"><rect x="3" y="0" width="8.500" height="14" rx="1.500" fill="#050505" /><path d="M.8 10v4.500c0 1.500 1 2 2 2h8.500c1 0 2-.5 2-2V10M7 16.500V20" fill="none" stroke="#050505" stroke-width="1.300" /></svg>
        <svg class="t3" viewBox="0 0 20 13"><rect x="5.500" y="4" width="11.500" height="7" fill="#050505" /><path d="M6 2.500h12v10H5.500M19.300 5.500v4" fill="none" stroke="#050505" stroke-width="1.200" /><path d="M1.500 0v2M4 0v2M.5 2.500h4.500v2.500l-1 1h-2.500l-1-1zM2.800 6v6.500H6" fill="none" stroke="#050505" /></svg>
        <svg class="t4" viewBox="0 0 16 16"><g fill="none" stroke="#333" stroke-width="1.100"><path d="M.7 15.500A15 15 0 0115.500.7M4.200 15.500A11.300 11.300 0 0115.500 4.300M7.500 15.500a8 8 0 018-7.700" /><path d="M10.500 15.500a5 5 0 015-4.500" /></g><circle cx="14" cy="14" r="1.700" fill="#222" /></svg>
        <svg class="t5" viewBox="0 0 21 18"><path d="M.8 6h3.500l4.500-4.200v14.400L4.300 12H.8z" fill="none" stroke="#222" stroke-width="1.200" /><path d="M11.500 6.500a4 4 0 010 5M14 4a8 8 0 010 10M16.700 1.500a12 12 0 010 15" fill="none" stroke="#222" stroke-width="1.200" /></svg>
        <span class="ime">英</span><span class="clk">10:19</span>
        <svg class="t6" viewBox="0 0 20 19"><path d="M0 0h20v16h-8l-2 3-2-3H0z" fill="#050505" /><path d="M4 4.500h12M4 8h12M4 11.500h8" stroke="#dce4ee" stroke-width="1.300" /></svg>
        <i></i>
      </div>
    </footer>
  </div>
</template>

<style>
body { margin: 0; overflow: hidden; }
</style>

<style scoped>
.screen { position: relative; width: 1920px; height: 1070px; overflow: hidden; background: #fefefd; font: 15.1px/20px "Noto Sans", "Noto Sans CJK SC", sans-serif; color: #141414; display: flex; flex-direction: column; }
.defs { position: absolute; }
p, h1, h2, h3 { margin: 0; }
svg { display: block; flex: none; }
span, label, b, p { white-space: nowrap; }

.explorer { height: 1042px; display: flex; flex-direction: column; }
.ex-title { height: 29px; display: flex; align-items: center; box-sizing: border-box; flex: none; }
.qi { width: 16px; height: 18px; }
.f1 { margin-left: 1px; } .f2 { margin-left: 14px; } .f3 { margin-left: 9px; }
.vs { width: 1px; height: 16px; background: #999; }
.v1 { margin-left: 9px; } .v2 { margin-left: 13px; }
.drop { width: 8px; height: 8px; margin-left: 10px; margin-top: 4px; }
.ex-name { margin-left: 8px; color: #969696; font-size: 14.8px; margin-top: -2px; }
.wctl { margin-left: auto; display: flex; gap: 46px; padding-right: 26px; }
.wctl svg { width: 12.500px; height: 12.500px; fill: none; stroke: #8f8f8f; stroke-width: 1; }
.ex-tabs { height: 32px; display: flex; border-bottom: 1px solid #dcdddd; box-sizing: border-box; flex: none; }
.tab { height: 30px; line-height: 30px; width: 64.500px; text-align: center; color: #333; }
.tab.file { width: 70px; height: 28px; line-height: 29px; background: #0560b5; color: #fff; margin-right: 1px; }
.tab.on { width: 61px; background: #f4f5f6; border: 1px solid #dcdddd; border-bottom: 0; box-sizing: content-box; margin-right: 1px; height: 31px; line-height: 29px; }
.ex-help { margin-left: auto; display: flex; align-items: center; gap: 9px; padding-right: 3px; height: 30px; }
.ex-help b { width: 20px; height: 20px; border-radius: 50%; background: #0a61cc; color: #fff; text-align: center; font-size: 14px; }
.ribbon { height: 124px; box-sizing: border-box; background: #f3f4f5; border-bottom: 1px solid #dadbdb; display: flex; flex: none; }
.grp { width: 299px; border-right: 1px solid #dedfe0; height: 118px; margin-top: 2px; display: flex; flex-direction: column; }
.g2 { border: 0; width: 110px; overflow: hidden; }
.tools { display: flex; height: 98px; }
.grp p { text-align: center; color: #555; }
.grp .p2 { text-align: left; padding-left: 93px; }
.big { display: flex; flex-direction: column; align-items: center; padding-top: 6px; box-sizing: border-box; }
.big span { margin-top: 4px; text-align: center; }
.big em { border: 4px solid transparent; border-top-color: #222; border-bottom: 0; margin-top: 0; width: 0; height: 0; }
.dim { color: #6f6f6f; }
.w1 { width: 77px; } .w1 svg { margin: 5px 0; color: #a0aabf; }
.w2 { width: 38px; } .w3 { width: 61px; }
.w4 { width: 56px; margin-left: 0; } .w5 { width: 46px; align-items: flex-start; }
.w5 svg { margin-left: 9px; } .w5 em { margin-left: 20px; } .w5 span { margin-left: 0; }
.smalls { display: flex; flex-direction: column; gap: 6px; padding-top: 5px; }
.smalls div { display: flex; align-items: center; gap: 4px; height: 20px; white-space: nowrap; }
.smalls svg { width: 18px; height: 20px; }
.addr { height: 54px; box-sizing: border-box; border-bottom: 1px solid #b9b9b9; display: flex; padding-top: 5px; flex: none; }
.addr span { margin-top: -2px; }
.arrows { width: 134px; height: 39px; box-sizing: border-box; padding-left: 16px; display: flex; align-items: center; }
.arrows svg:nth-child(2) { margin-left: 23px; } .arrows svg:nth-child(3) { margin-left: 17px; } .arrows svg:nth-child(4) { margin-left: 15px; }
.path { width: 1524px; height: 39px; box-sizing: border-box; border: 1px solid #d9d9d9; display: flex; align-items: center; }
.pf { width: 16px; height: 18px; margin-left: 4px; }
.ch { width: 6px; height: 10px; fill: none; stroke: #777; stroke-width: 1.600; margin: 0 10px 0 11px; }
.ssd { letter-spacing: .35px; }
.re { width: 15px; height: 15px; margin-left: auto; margin-right: 10px; }
.find { margin-left: 12px; width: 238px; height: 39px; box-sizing: border-box; border: 1px solid #d9d9d9; display: flex; align-items: center; padding-left: 17px; color: #666; gap: 17px; letter-spacing: .2px; }
.ex-body { flex: 1; min-height: 0; display: flex; }
.tree { width: 248px; box-sizing: content-box; border-right: 1px solid #f0f0f0; padding-top: 20px; height: 754px; }
.row { height: 30px; display: flex; align-items: center; padding-left: 41px; gap: 6px; width: 246px; box-sizing: border-box; white-space: nowrap; }
.row span { margin-top: -1px; }
.row svg { width: 18px; height: 18px; }
.row.top { padding-left: 30px; gap: 5px; } .row.top svg { width: 20px; }
.row.gap { margin-top: 10px; }
.row.active { background: #d9d9d8; letter-spacing: .38px; }
.row .pin { width: 13px; height: 13px; margin-left: auto; margin-right: 4px; color: #8f9396; }
.list { width: 1651px; }
.colh { height: 32px; line-height: 33px; padding-left: 23px; color: #4b5b75; }
.rows { height: 742px; overflow: hidden; margin-left: 20px; }
.shift { margin-top: -14.500px; }
.frow { height: 27px; display: flex; align-items: center; padding-left: 6px; gap: 6px; width: 300px; }
.frow svg { width: 18px; height: 18px; margin-top: -1px; }
.frow span { margin-top: -.500px; }
.selected { background: #d9d9d8; letter-spacing: .25px; }
.faded svg, .ghost svg { opacity: .5; }
.sbar { width: 20px; height: 773px; background: #efefef; display: flex; flex-direction: column; align-items: center; justify-content: space-between; margin-left: auto; margin-right: 1px; box-sizing: border-box; padding: 7px 0; flex: none; }
.sbar svg { width: 10px; height: 7px; fill: none; stroke: #555; stroke-width: 2; }
.thumb { width: 20px; height: 529px; background: #cbcbcb; margin-top: 204px; flex: none; }
.status { height: 29px; display: flex; align-items: center; color: #2b3a55; flex: none; }
.s1, .s2 { margin-top: -2px; }
.s1 { margin-left: 17px; width: 79px; } .s2 { margin-left: 12px; width: 173px; letter-spacing: .1px; }
.status i { width: 1px; height: 13px; background: #e6e6e6; }
.views { margin-left: auto; display: flex; align-items: center; gap: 5px; padding-right: 10px; }
.v.on { width: 26px; height: 27px; border: 1px solid #4a9cc0; background: #c9e6f2; display: flex; align-items: center; justify-content: center; }
.v2i { width: 18px; height: 18px; }

.npp { position: absolute; left: 342px; top: 288px; width: 300px; height: 589px; background: #fdfdfd; border: 1px solid #a0a0a0; box-sizing: border-box; box-shadow: 0 3px 14px rgba(0,0,0,.32); display: flex; flex-direction: column; color: #777; }
.npp > div { flex: none; }
.np-title { height: 36px; display: flex; align-items: center; padding-left: 9px; gap: 5px; color: #999; }
.np-title svg { width: 20px; height: 20px; }
.np-menu { height: 24px; line-height: 27px; padding-left: 8px; display: flex; gap: 14px; border-bottom: 1px solid #eee; }
.np-tools { height: 28px; display: flex; align-items: center; gap: 7px; padding-left: 5px; border-bottom: 2px solid #e2e2e2; }
.np-tools svg { width: 19px; height: 20px; }
.np-tab { height: 28px; margin: 5px 0 0 2px; background: #bdbdbd; display: flex; align-items: center; padding-left: 3px; gap: 8px; font: 13.500px "Liberation Mono", monospace; }
.np-tab svg { width: 17px; height: 16px; }
.np-edit { height: 409px; margin-left: 3px; border-left: 2px solid #707070; border-top: 2px solid #707070; background: #e4e4e3; box-sizing: border-box; font: 26.300px/30.900px "Liberation Mono", monospace; color: #8b8b8b; }
.np-edit div { width: 52px; text-align: right; }
.np-scroll { height: 23px; margin-left: 3px; background: #f0f0f0; display: flex; align-items: center; padding-left: 6px; gap: 8px; border-bottom: 2px solid #8b8b8b; border-left: 1px solid #707070; }
.np-scroll svg { width: 7px; height: 10px; } .np-scroll i { width: 200px; height: 23px; background: #cdcdcd; }
.np-status { height: 29px; background: #f1f1f1; color: #222; line-height: 31px; padding-left: 2px; }

.gh { position: absolute; left: 395px; top: 50px; width: 1240px; height: 975px; background: #969694; box-shadow: 0 2px 15px rgba(0,0,0,.4); display: flex; flex-direction: column; color: #202326; font-size: 14px; }
.gh-menu { height: 34px; background: #18191b; border-bottom: 1px solid #000; display: flex; align-items: center; padding-left: 13px; font-size: 15.200px; color: #a1a19e; flex: none; }
.logo { width: 20px; height: 20px; color: #8b8c8d; margin-right: 25px; }
.gh-menu span { margin-right: 25.300px; margin-top: -2px; }
.gctl { margin-left: auto; display: flex; gap: 43.500px; padding-right: 21.500px; margin-top: -2px; }
.gctl svg { width: 13px; height: 13px; fill: none; stroke: #6c6d6e; stroke-width: 1.100; }
.gh-bar { height: 63px; background: #18191b; display: flex; flex: none; color: #949698; }
.seg { display: flex; align-items: center; box-sizing: border-box; border-right: 1px solid #000; height: 61px; }
.seg p { color: #7d8184; line-height: 18px; } .seg b { display: block; color: #adadaa; line-height: 18px; font-weight: 700; font-size: 15.200px; }
.seg em, .meta em { border: 5px solid transparent; border-top-color: #a5a5a3; border-bottom: 0; margin-left: auto; }
.seg.a { width: 313px; padding: 0 18px 0 13px; } .seg.b { width: 287px; padding: 0 18px 0 12px; } .seg.c { width: 288px; padding-left: 16px; padding-top: 2px; }
.seg.c p { font-size: 14.100px; }
.m { width: 20px; height: 20px; margin-right: 12px; } .br { width: 20px; height: 20px; margin-right: 12px; } .up { width: 14px; height: 18px; margin-right: 15px; margin-top: -2px; }
.k1 { letter-spacing: .15px; margin-top: -1px; } .k2 { margin-top: -1px; } .k3 { letter-spacing: .03px; }
.gh-main { flex: 1; display: flex; min-height: 0; }
.hist { width: 312px; border-right: 1px solid #828381; }
.gt { height: 36px; display: flex; border-bottom: 1px solid #858684; font-size: 15px; }
.gt span { flex: 1; text-align: center; line-height: 36px; box-sizing: border-box; }
.gt .on { border-left: 1px solid #848583; border-bottom: 4px solid #0b3f8c; margin-right: 1px; }
.fbox { height: 47px; padding: 6px; box-sizing: border-box; border-bottom: 1px solid #868786; }
.fbox div { height: 34px; width: 299px; box-sizing: border-box; border: 1px solid #868888; border-radius: 6px; display: flex; align-items: center; padding-left: 9px; gap: 6px; font-size: 15.350px; color: #4b4f53; background: #949594; }
.fbox svg { width: 19px; height: 18px; }
.ci { height: 65px; background: #8b8b8a; border-bottom: 1px solid #848584; box-sizing: border-box; padding: 6px 0 0 13px; color: #1c1e20; }
.ci b { font-size: 15px; line-height: 20px; display: block; color: #15171a; letter-spacing: -.05px; }
.ci p { display: flex; align-items: center; margin-top: 6px; letter-spacing: .12px; }
.ci svg { width: 19px; height: 19px; margin-right: 5px; }
.li { letter-spacing: -.04px; }
.detail { flex: 1; display: flex; flex-direction: column; min-width: 0; }
.dh { height: 79px; border-bottom: 1px solid #838482; padding-left: 12px; box-sizing: border-box; flex: none; }
h2 { font-size: 17.700px; line-height: 26px; padding-top: 10px; color: #15171a; letter-spacing: -.1px; }
.meta { display: flex; align-items: center; height: 20px; margin-top: 10px; }
.av { width: 20px; height: 20px; margin-right: 5px; }
.cm { width: 20px; height: 20px; margin: 0 4px 0 12.500px; color: #15171a; }
.pm { width: 13px; height: 17px; margin: 0 8px 0 16px; color: #15171a; }
.cf { letter-spacing: .06px; }
.add { color: #1d5e38; margin-left: 14px; } .del { color: #87302f; margin-left: 14px; }
.gr { width: 20px; height: 20px; margin-left: 13.500px; color: #15171a; }
.meta em { border-top-color: #15171a; margin-left: 6px; }
.dd { flex: 1; display: flex; min-height: 0; }
.fl { width: 312px; border-right: 1px solid #858684; box-sizing: border-box; }
.fl div { height: 36px; background: #8c8c8b; border-bottom: 1px solid #848584; display: flex; align-items: center; justify-content: space-between; padding: 0 13px 0 12px; font-size: 14.900px; }
.fl span { margin-top: -2px; letter-spacing: .06px; }
.fl svg { width: 18px; height: 18px; margin-top: 1px; color: #166433; }
.diff { flex: 1; font: 12.560px "DejaVu Sans Mono", monospace; }
.diff code { font: inherit; line-height: inherit; padding-left: 6px; white-space: pre; }
.diff i { font-style: normal; width: 44px; box-sizing: border-box; border-right: 1px solid #7588a0; text-align: right; padding-right: 7px; }
.hunk, .plus { display: flex; }
.hunk { height: 34px; line-height: 36px; background: #8f9193; } .hunk i { background: #818d99; border-color: #76889b; }
.plus { height: 52px; line-height: 28px; background: #88988a; } .plus i { background: #739679; border-color: #4f8062; line-height: 22px; }

.dlg { position: absolute; left: 640px; top: 280px; width: 750px; height: 515px; background: #fefefd; border-radius: 7px; box-shadow: 0 3px 14px rgba(0,0,0,.3); display: flex; flex-direction: column; font-size: 15px; color: #35383b; }
.dlg header { height: 63px; border-bottom: 1px solid #e1e4e8; display: flex; align-items: center; justify-content: space-between; padding: 0 18px 0 26px; }
.dlg h1 { font-size: 17.900px; color: #24292e; }
.dlg header svg { width: 12px; height: 12px; stroke: #626669; stroke-width: 1.500; margin-top: 1px; }
.db { height: 367px; display: flex; border-bottom: 1px solid #e1e4e8; }
.db nav { width: 240px; box-sizing: border-box; border-right: 1px solid #e1e4e8; padding: 17px 25px 0 26px; display: flex; flex-direction: column; gap: 8.200px; }
.db nav div { height: 45px; border-radius: 6px; display: flex; align-items: center; padding-left: 13px; gap: 12.500px; flex: none; }
.db nav span { margin-top: -1px; }
.db nav svg { width: 20px; height: 20px; color: #6a7076; }
.db nav .on { background: #0460df; color: #fff; } .db nav .on svg { color: #fff; }
form { padding: 24px 26px 0 25px; flex: 1; display: flex; flex-direction: column; }
label { line-height: 22px; height: 22px; }
.inp { height: 32px; box-sizing: border-box; border: 1px solid #dfe2e4; border-radius: 6px; padding-left: 7px; line-height: 29px; margin-top: 5px; }
.l2 { margin-top: 11px; }
.focus { border: 1.500px solid #1a5fc0; box-shadow: 0 0 2px #6db4f5; margin-top: 5px; margin-bottom: 1px; line-height: 31px; }
mark { background: #308cf8; color: #e9f3ff; font-size: 15.450px; line-height: 19px; display: inline-block; height: 19px; vertical-align: middle; margin-top: -3px; }
h3 { font-size: 17.700px; line-height: 24px; margin: 25px 0 13px; color: #24292e; white-space: nowrap; }
.rd { display: flex; align-items: center; height: 22px; gap: 8px; margin-bottom: 6.600px; font-size: 14.850px; }
.rd i { width: 15px; height: 15px; box-sizing: border-box; border: 1px solid #767676; border-radius: 50%; }
.rd.on i { border: 1.500px solid #0a6cf0; background: radial-gradient(circle, #0a6cf5 4.300px, #fff 5px); }
form p { color: #717579; font-size: 14.070px; margin-top: 20px; }
.dlg footer { display: flex; justify-content: flex-end; gap: 6px; padding: 26px 26px 0 0; }
.dlg footer span { width: 150px; height: 31px; line-height: 28px; border-radius: 6px; text-align: center; box-sizing: border-box; }
.dlg footer .save { background: #0460df; color: #fff; line-height: 30px; } .cancel { background: #fafbfc; border: 1px solid #e1e4e8; }

.cursor { position: absolute; left: 889px; top: 489px; }
.pause { position: absolute; left: 11px; top: 8px; font: 700 19.500px/26px "Noto Sans CJK SC", sans-serif; color: #7188ee; text-shadow: -1.500px -1.500px 0 #1c1c22, 1.500px -1.500px 0 #1c1c22, -1.500px 1.500px 0 #1c1c22, 1.500px 1.500px 0 #1c1c22, 0 2px 1px #1c1c22, 2px 0 1px #1c1c22, -2px 0 1px #1c1c22; }

.task { position: relative; height: 28px; background: #d2dce6; display: flex; overflow: hidden; }
.ti { position: relative; width: 46px; height: 38px; display: flex; justify-content: center; align-items: center; flex: none; }
.ti svg { width: 20px; height: 20px; }
.ti b { position: absolute; left: 0; right: 0; top: 9px; text-align: center; font-size: 9.500px; line-height: 18px; color: #31a8ff; }
.ti b.mk-mf { color: #111; font-size: 10.500px; font-weight: 800; line-height: 20px; }
.ti b.mk-ij { color: #fff; font: 700 10px/14px "Liberation Mono", monospace; top: 10px; }
.st { width: 44px; } .se { width: 49px; } .se svg { margin-right: 2px; }
.ti.cur { background: #e9eef5; }
.tray { margin-left: auto; display: flex; align-items: center; height: 38px; width: 295px; flex: none; }
.t1 { width: 16px; height: 9px; } .t2 { width: 14px; height: 20px; margin-left: 14px; margin-top: 1px; } .t3 { width: 20px; height: 14px; margin-left: 14px; } .t4 { width: 16px; height: 16px; margin-left: 13px; margin-top: 3px; } .t5 { width: 21px; height: 18px; margin-left: 10px; }
.ime { font-size: 20px; margin-left: 8px; font-weight: 500; margin-top: -1px; color: #000; } .clk { margin-left: 15px; width: 41px; font-size: 14.900px; letter-spacing: -.1px; }
.t6 { width: 20px; height: 19px; margin-left: 22px; }
.tray i { width: 1px; height: 38px; background: #a5b0bb; margin-left: auto; margin-right: 5px; }
</style>
